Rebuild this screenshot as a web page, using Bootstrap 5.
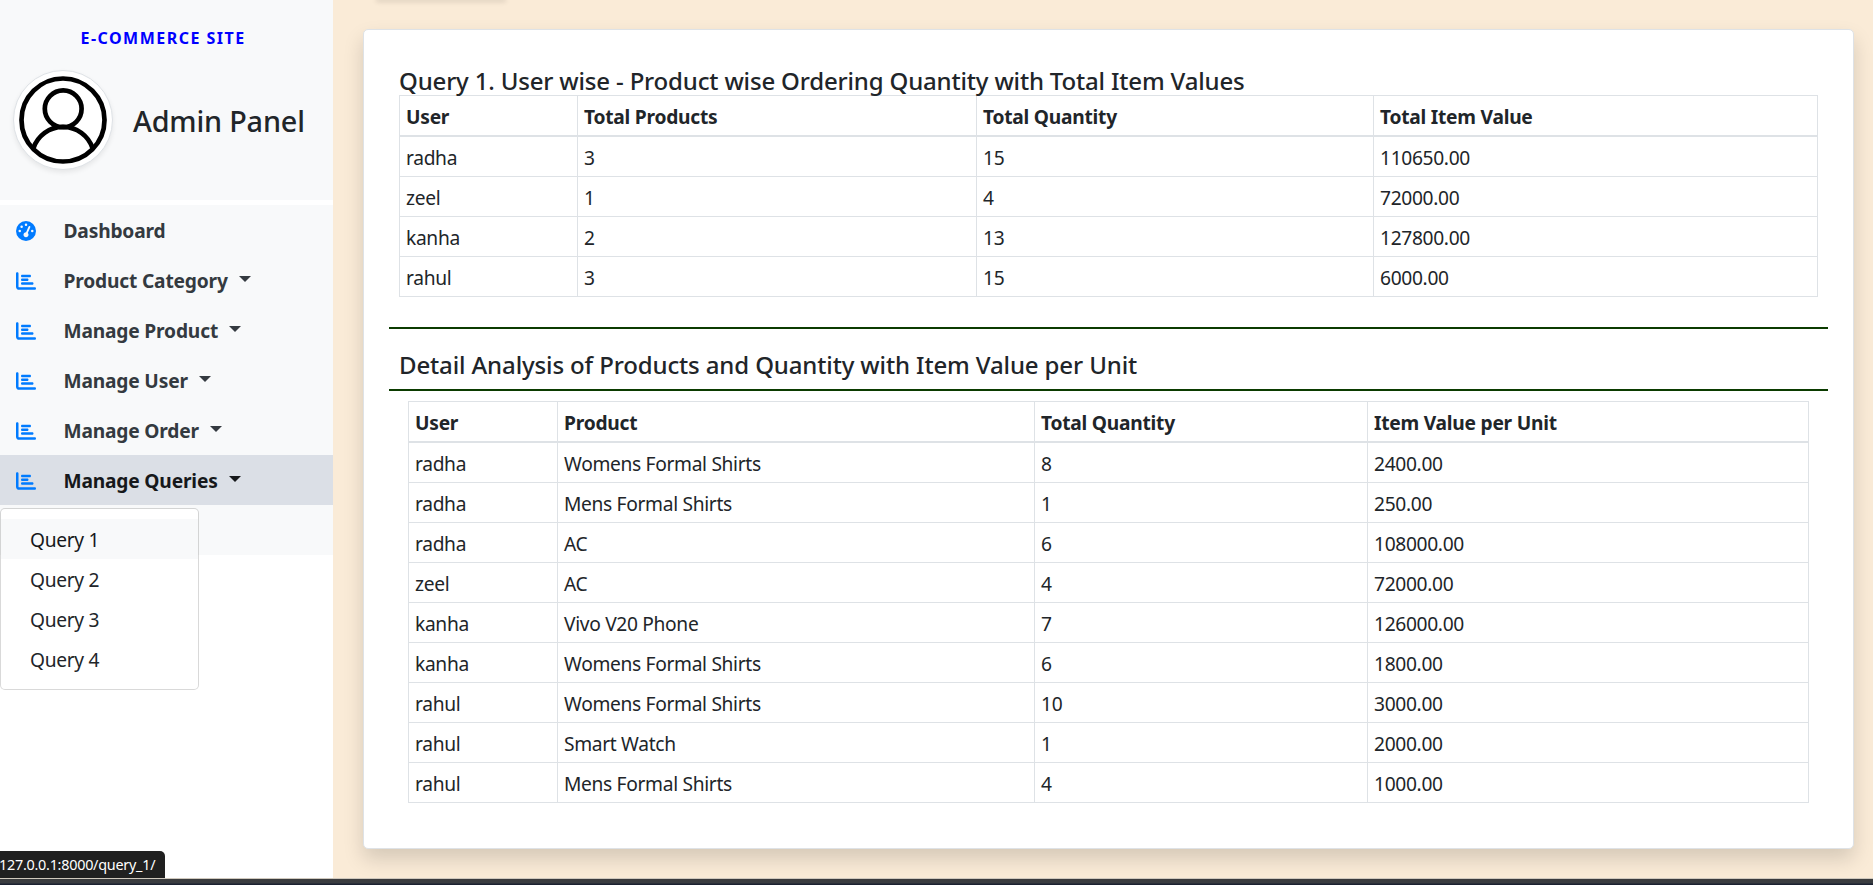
<!DOCTYPE html>
<html lang="en">
<head>
<meta charset="utf-8">
<title>Admin Panel</title>
<link href="https://cdn.jsdelivr.net/npm/bootstrap@5.3.0/dist/css/bootstrap.min.css" rel="stylesheet">
<style>
  body { font-family: "Noto Sans", sans-serif; font-size: 19.2px; line-height: 30px; letter-spacing: -.33px; color: #212529; background: #faebd7; height: 885px; overflow: hidden; }
  .sidebar { width: 333px; background: #fff; }
  .side-head { height: 200px; padding: 25px 13px 0; margin-bottom: 5px; background: #f8f9fa; }
  .brand { font-size: 16px; line-height: 26px; letter-spacing: 1.48px; color: #00f; padding-left: 67.5px; }
  .avatar { width: 100px; height: 100px; padding: 5px; border: 1px solid #dee2e6; background: #fff; box-shadow: 0 2.5px 5px rgba(0,0,0,.075); }
  .panel-title { font-size: 28.8px; line-height: 36px; letter-spacing: -.18px; font-weight: 500; padding-top: 2px; }
  .side-nav { background: #f8f9fa; height: 350px; }
  .side-nav .nav-link { height: 50px; padding: 12px 15.5px 10px; color: #343a40; font-weight: 700; letter-spacing: -.18px; }
  .side-nav .nav-link.active { background: #dbdfe6; color: #16181b; }
  .side-nav svg { width: 20px; height: 20px; fill: #007bff; margin-right: 28px; flex: none; }
  .side-nav .dropdown-toggle::after { margin: -4px 0 0 11px; border-top: 6px solid; border-right: 6px solid transparent; border-left: 6px solid transparent; }
  .side-nav .dropdown-menu { top: 53px; left: 0; width: 199px; height: 182px; padding: 10px 0; margin: 0; border: 1px solid rgba(0,0,0,.15); border-radius: 5px; font-size: 19.2px; }
  .side-nav .dropdown-item { height: 40px; padding: 6px 29px 4px; color: #212529; }
  .side-nav .dropdown-item.hovered { background: #f8f9fa; color: #16181b; }
  .main-pane { padding: 0 20px 0 30px; }
  .cut-shadow { width: 126px; height: 0; margin-left: 15px; box-shadow: 0 0 5px 2px rgba(0,0,0,.12); }
  .report { margin-top: 29px; height: 820px; border: 1px solid #dee2e6; border-radius: 5px; box-shadow: 0 10px 20px rgba(0,0,0,.15); padding: 36px 25px 0; }
  .report h5 { font-size: 24px; line-height: 30px; letter-spacing: -.17px; font-weight: 500; margin: 0; padding-left: 10px; }
  .report h5.first-title { height: 29px; }
  .report h5.detail-title { height: 60px; padding-top: 21px; letter-spacing: -.13px; }
  .report table { table-layout: fixed; border-color: #dee2e6; margin: 0; color: #212529; }
  .report th, .report td { height: 40px; padding: 6px 6px 0; line-height: 30px; vertical-align: top; }
  .report th { letter-spacing: -.24px; }
  .report thead th { border-bottom: 2px solid #dee2e6; }
  .report tbody { border-top: 0 !important; }
  .report tbody tr:first-child td { height: 41px; }
  .summary { width: 1419px; margin-left: 10px !important; }
  .detail { width: 1401px; margin-left: 19px !important; }
  .rule-line { height: 2px; background: #0b3b00; width: 1439px; }
  .status-url { left: 0; bottom: 7px; height: 27px; width: 165px; background: #202020; color: #fff; border-top-right-radius: 5px; font-size: 14.4px; line-height: 27px; letter-spacing: -.26px; text-indent: -1px; white-space: nowrap; }
  .bottom-strip { height: 7px; border-top: 1px solid #cfc8bd; background: linear-gradient(#3a3b3c 0, #3a3d41 4px, #1b2130 5px); }
</style>
</head>
<body class="d-flex flex-column position-relative">
<svg class="d-none">
  <symbol id="i-chart" viewBox="0 0 512 512"><path d="M32 32c17.700 0 32 14.300 32 32V400c0 8.800 7.200 16 16 16H480c17.700 0 32 14.300 32 32s-14.300 32-32 32H80c-44.200 0-80-35.800-80-80V64C0 46.300 14.300 32 32 32zm96 96c0-17.700 14.300-32 32-32h192c17.700 0 32 14.300 32 32s-14.300 32-32 32H160c-17.700 0-32-14.300-32-32zm32 64H288c17.700 0 32 14.300 32 32s-14.300 32-32 32H160c-17.700 0-32-14.300-32-32s14.300-32 32-32zm0 96H416c17.700 0 32 14.300 32 32s-14.300 32-32 32H160c-17.700 0-32-14.300-32-32s14.300-32 32-32z"/></symbol>
  <symbol id="i-gauge" viewBox="0 0 512 512"><path fill-rule="evenodd" d="M0 256a256 256 0 1 1 512 0A256 256 0 1 1 0 256zM288 96a32 32 0 1 0-64 0 32 32 0 1 0 64 0zM256 416c35.300 0 64-28.700 64-64c0-17.400-6.900-33.100-18.100-44.600L366 161.700c5.300-12.100-.2-26.300-12.300-31.600s-26.300 .2-31.600 12.300L257.900 288H256c-35.300 0-64 28.700-64 64s28.700 64 64 64zM176 144a32 32 0 1 0-64 0 32 32 0 1 0 64 0zM96 288a32 32 0 1 0 0-64 32 32 0 1 0 0 64zm352-32a32 32 0 1 0-64 0 32 32 0 1 0 64 0z"/></symbol>
</svg>
<div class="d-flex flex-grow-1 overflow-hidden">
  <aside class="sidebar flex-shrink-0 overflow-hidden">
    <div class="side-head">
      <div class="brand fw-bold">E-COMMERCE SITE</div>
      <div class="d-flex align-items-center" style="margin-top:19px">
        <div class="avatar rounded-circle flex-shrink-0">
          <svg class="d-block" width="88" height="88" viewBox="0 0 88 88" fill="none" stroke="#000" stroke-width="4.700"><circle cx="44" cy="44" r="41.500"/><circle cx="44.200" cy="32.800" r="18.400"/><path d="M14.300 72.500A31.200 31.200 0 0 1 73.700 72.500"/></svg>
        </div>
        <div class="panel-title ms-3 ps-1">Admin Panel</div>
      </div>
    </div>
    <nav class="side-nav nav flex-column">
      <a class="nav-link d-flex align-items-center"><svg><use href="#i-gauge"/></svg>Dashboard</a>
      <a class="nav-link dropdown-toggle d-flex align-items-center"><svg><use href="#i-chart"/></svg>Product Category</a>
      <a class="nav-link dropdown-toggle d-flex align-items-center"><svg><use href="#i-chart"/></svg>Manage Product</a>
      <a class="nav-link dropdown-toggle d-flex align-items-center"><svg><use href="#i-chart"/></svg>Manage User</a>
      <a class="nav-link dropdown-toggle d-flex align-items-center"><svg><use href="#i-chart"/></svg>Manage Order</a>
      <div class="dropdown">
        <a class="nav-link dropdown-toggle active d-flex align-items-center"><svg><use href="#i-chart"/></svg>Manage Queries</a>
        <div class="dropdown-menu show">
          <a class="dropdown-item hovered">Query 1</a>
          <a class="dropdown-item">Query 2</a>
          <a class="dropdown-item">Query 3</a>
          <a class="dropdown-item">Query 4</a>
        </div>
      </div>
    </nav>
  </aside>
  <main class="main-pane flex-grow-1">
    <div class="cut-shadow"></div>
    <section class="report bg-white">
      <h5 class="first-title">Query 1. User wise - Product wise Ordering Quantity with Total Item Values</h5>
      <table class="table table-bordered summary">
        <colgroup><col style="width:178px"><col style="width:399px"><col style="width:397px"><col></colgroup>
        <thead><tr><th>User</th><th>Total Products</th><th>Total Quantity</th><th>Total Item Value</th></tr></thead>
        <tbody>
          <tr><td>radha</td><td>3</td><td>15</td><td>110650.00</td></tr>
          <tr><td>zeel</td><td>1</td><td>4</td><td>72000.00</td></tr>
          <tr><td>kanha</td><td>2</td><td>13</td><td>127800.00</td></tr>
          <tr><td>rahul</td><td>3</td><td>15</td><td>6000.00</td></tr>
        </tbody>
      </table>
      <div class="rule-line" style="margin-top:30px"></div>
      <h5 class="detail-title">Detail Analysis of Products and Quantity with Item Value per Unit</h5>
      <div class="rule-line" style="margin-bottom:10px"></div>
      <table class="table table-bordered detail">
        <colgroup><col style="width:149px"><col style="width:477px"><col style="width:333px"><col></colgroup>
        <thead><tr><th>User</th><th>Product</th><th>Total Quantity</th><th>Item Value per Unit</th></tr></thead>
        <tbody>
          <tr><td>radha</td><td>Womens Formal Shirts</td><td>8</td><td>2400.00</td></tr>
          <tr><td>radha</td><td>Mens Formal Shirts</td><td>1</td><td>250.00</td></tr>
          <tr><td>radha</td><td>AC</td><td>6</td><td>108000.00</td></tr>
          <tr><td>zeel</td><td>AC</td><td>4</td><td>72000.00</td></tr>
          <tr><td>kanha</td><td>Vivo V20 Phone</td><td>7</td><td>126000.00</td></tr>
          <tr><td>kanha</td><td>Womens Formal Shirts</td><td>6</td><td>1800.00</td></tr>
          <tr><td>rahul</td><td>Womens Formal Shirts</td><td>10</td><td>3000.00</td></tr>
          <tr><td>rahul</td><td>Smart Watch</td><td>1</td><td>2000.00</td></tr>
          <tr><td>rahul</td><td>Mens Formal Shirts</td><td>4</td><td>1000.00</td></tr>
        </tbody>
      </table>
    </section>
  </main>
</div>
<div class="bottom-strip flex-shrink-0"></div>
<div class="status-url position-absolute">127.0.0.1:8000/query_1/</div>
<script src="https://cdn.jsdelivr.net/npm/bootstrap@5.3.0/dist/js/bootstrap.bundle.min.js"></script>
</body>
</html>
